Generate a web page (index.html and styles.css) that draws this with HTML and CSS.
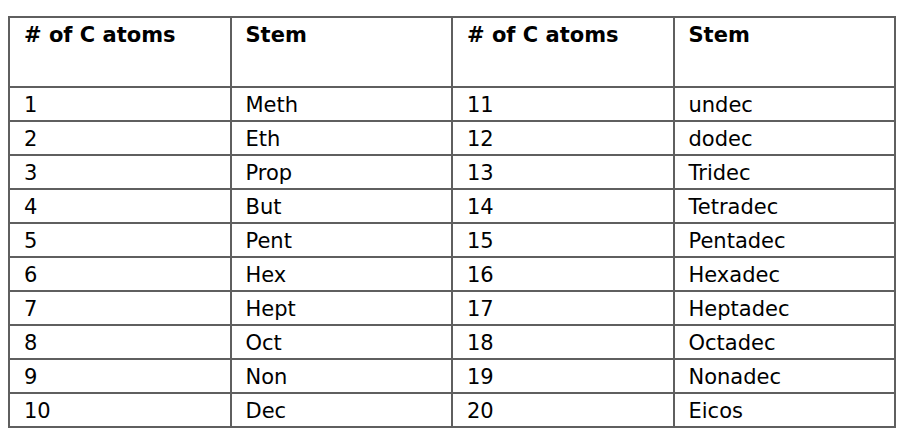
FILE: index.html
```html
<!DOCTYPE html>
<html>
<head>
<meta charset="utf-8">
<link rel="stylesheet" href="styles.css">
</head>
<body>
<table class="stems">
  <colgroup><col class="c"><col class="c"><col class="c"><col class="c"></colgroup>
  <tr class="head"><th># of C atoms</th><th>Stem</th><th># of C atoms</th><th>Stem</th></tr>
  <tr><td>1</td><td>Meth</td><td>11</td><td>undec</td></tr>
  <tr><td>2</td><td>Eth</td><td>12</td><td>dodec</td></tr>
  <tr><td>3</td><td>Prop</td><td>13</td><td>Tridec</td></tr>
  <tr><td>4</td><td>But</td><td>14</td><td>Tetradec</td></tr>
  <tr><td>5</td><td>Pent</td><td>15</td><td>Pentadec</td></tr>
  <tr><td>6</td><td>Hex</td><td>16</td><td>Hexadec</td></tr>
  <tr><td>7</td><td>Hept</td><td>17</td><td>Heptadec</td></tr>
  <tr><td>8</td><td>Oct</td><td>18</td><td>Octadec</td></tr>
  <tr><td>9</td><td>Non</td><td>19</td><td>Nonadec</td></tr>
  <tr><td>10</td><td>Dec</td><td>20</td><td>Eicos</td></tr>
</table>
</body>
</html>
```
FILE: styles.css
```css
html, body { background: #fff; }
body {
  margin: 16px 8px 0 8px;
  font-family: "DejaVu Sans", Verdana, sans-serif;
  color: #000;
}
.stems {
  border-collapse: collapse;
  table-layout: fixed;
  width: 888px;
}
.stems .c { width: 25%; }
.stems th, .stems td {
  border: 2px solid #5f5f5f;
  text-align: left;
  padding: 0 0 0 14px;
  font-size: 21px;
  line-height: 24px;
}
.stems th {
  font-weight: bold;
  vertical-align: top;
  height: 70px;
  box-sizing: border-box;
  padding-top: 5px;
}
.stems td {
  height: 34px;
  box-sizing: border-box;
  vertical-align: middle;
  padding-top: 1px;
}
```
